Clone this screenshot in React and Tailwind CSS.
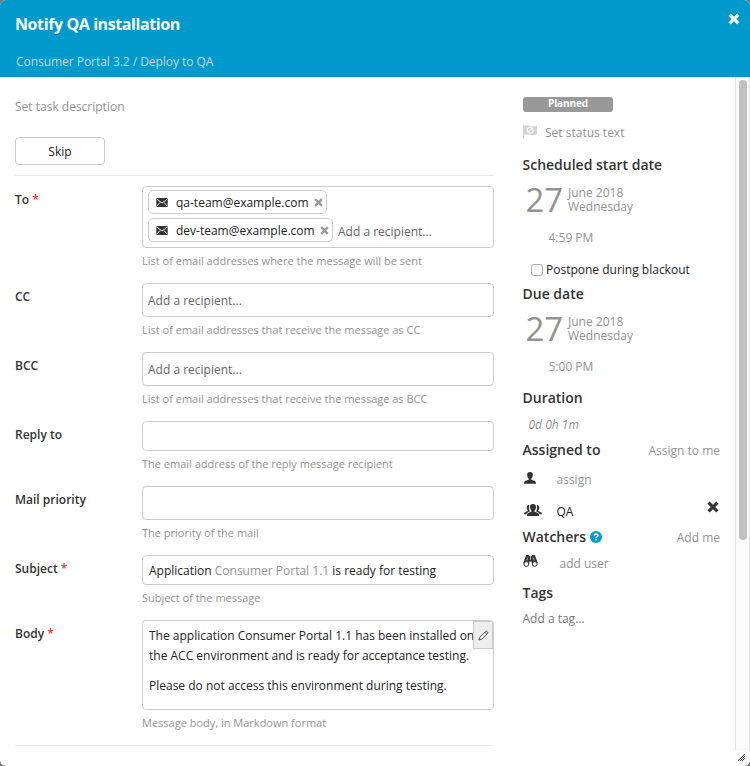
import React from "react";

function Cross({ size, color, className = "" }) {
  return (
    <svg width={size} height={size} viewBox="0 0 10 10" className={"shrink-0 " + className}>
      <path d="M1.3 1.3 8.7 8.7M8.7 1.3 1.3 8.7" stroke={color} strokeWidth="2.6" fill="none" />
    </svg>
  );
}

function Envelope() {
  return (
    <svg width="12" height="9" viewBox="0 0 12 9" className="ml-[7px] mr-[8px] shrink-0">
      <rect x="0.3" y="0" width="11.4" height="9" rx="0.5" fill="#333" />
      <path d="M0.5 0.8 6 5 11.5 0.8M0.8 8.2 4.1 4.3M11.2 8.2 7.9 4.3" stroke="#fff" strokeWidth="0.9" fill="none" />
    </svg>
  );
}

function Chip({ children, width }) {
  return (
    <div className={"flex h-6 shrink-0 items-center rounded-[5px] border border-[#ccc] " + width}>
      <Envelope />
      <span className="grow pt-px text-[12px] text-[#222]">{children}</span>
      <Cross size={9} color="#999" className="mr-[3px] mt-px" />
    </div>
  );
}

function Field({ label, required, help, height, box = "", children }) {
  return (
    <div className="flex">
      <div className="h-[27px] w-[127px] shrink-0 text-[12px] font-semibold leading-[27px] text-[#333]">
        {label}
        {required && <span className="text-[#d9392f]"> *</span>}
      </div>
      <div className="w-[352px]">
        <div className={"relative overflow-hidden rounded-[4px] border border-[#ccc] " + height + " " + box}>{children}</div>
        <div className="mb-3 mt-[3px] h-5 whitespace-nowrap text-[11px] leading-5 text-[#929292]">{help}</div>
      </div>
    </div>
  );
}

function Heading({ children }) {
  return <span className="text-[14px] font-semibold text-[#333]">{children}</span>;
}

function DateBlock() {
  return (
    <div className="mt-2.5 flex h-[30px] items-center pl-[3px] text-[#929292]">
      <span className="w-[42.5px] text-[33px] leading-[30px]">27</span>
      <div className="text-[12px] leading-[14px]">
        <div>June 2018</div>
        <div>Wednesday</div>
      </div>
    </div>
  );
}

export default function App() {
  return (
    <div className="h-[766px] w-[750px] bg-[#777]">
      <div className="flex h-[766px] w-[750px] flex-col overflow-hidden whitespace-nowrap rounded-[6px] bg-white font-['Open_Sans','Noto_Sans',sans-serif] text-[12px]">
        <header className="flex h-[77px] shrink-0 justify-between bg-[#0099cc] pl-[15px] pr-[10px]">
          <div>
            <div className="mt-[14px] h-5 text-[16px] font-bold leading-5 tracking-[-0.4px] text-white">Notify QA installation</div>
            <div className="ml-px mt-[18px] h-5 text-[12px] font-medium leading-5 tracking-[-0.04px] text-[#ccd5d9]">Consumer Portal 3.2 / Deploy to QA</div>
          </div>
          <Cross size={12} color="#fff" className="mt-[13px]" />
        </header>
        <div className="flex h-[674px] shrink-0">
          <main className="ml-[15px] w-[479px] shrink-0">
            <div className="mt-5 h-5 leading-5 text-[#929292]">Set task description</div>
            <button className="mt-[20px] block h-7 w-[90px] rounded-[4px] border border-[#ccc] pt-px text-[12px] leading-[26px] text-[#222]">Skip</button>
            <div className="mb-[10px] mt-[10px] h-px bg-[#e8e8e8]" />
            <Field label="To" required help="List of email addresses where the message will be sent" height="h-[62px]" box="pl-[5px] pt-[3px]">
              <Chip width="w-[179px]">qa-team@example.com</Chip>
              <div className="mt-1 flex items-center">
                <Chip width="w-[185px]">dev-team@example.com</Chip>
                <span className="ml-[5px] pt-[3px] text-[12px] text-[#666]">Add a recipient...</span>
              </div>
            </Field>
            <Field label="CC" help="List of email addresses that receive the message as CC" height="h-[34px]" box="pl-[5px] leading-[34px] text-[#666]">Add a recipient...</Field>
            <Field label="BCC" help="List of email addresses that receive the message as BCC" height="h-[34px]" box="pl-[5px] leading-[34px] text-[#666]">Add a recipient...</Field>
            <Field label="Reply to" help="The email address of the reply message recipient" height="h-[30px]" />
            <Field label="Mail priority" help="The priority of the mail" height="h-[34px]" />
            <Field label="Subject" required help="Subject of the message" height="h-[30px]" box="pl-[6px] leading-[29px] text-[#222]">
              Application <span className="text-[#929292]">Consumer Portal 1.1</span> is ready for testing
            </Field>
            <Field label="Body" required help="Message body, in Markdown format" height="h-[90px]" box="pl-[6px] pt-[5px] text-[#222]">
              <p className="leading-5">The application Consumer Portal 1.1 has been installed on<br />the ACC environment and is ready for acceptance testing.</p>
              <p className="mt-[10px] leading-5">Please do not access this environment during testing.</p>
              <div className="absolute right-0 top-0 flex h-7 w-5 items-center justify-center border border-[#ccc] bg-[#eee]">
                <svg width="11" height="11" viewBox="0 0 11 11" fill="none" stroke="#444" strokeWidth="0.9">
                  <path d="M1 10 1.8 7.2 7.4 1.5Q8.3.7 9.2 1.6T9.5 3.5L3.8 9.2ZM6.8 2.2 8.9 4.3" />
                </svg>
              </div>
            </Field>
            <div className="h-px bg-[#e8e8e8]" />
          </main>
          <aside className="ml-[28.5px] w-[197.5px] shrink-0 pt-5 leading-5 text-[#929292]">
            <div className="ml-[0.5px] h-[15px] w-[90px] rounded-[3px] bg-[#999] text-center text-[10px] font-bold leading-[13px] tracking-[-0.1px] text-white">Planned</div>
            <div className="mt-[10px] flex h-5 items-center">
              <svg width="14" height="14" viewBox="0 0 14 14" className="mr-[8.5px]">
                <path d="M0 0H1V14H0ZM1 1Q4-.5 7 .8T14 .5V9.5Q10 11 7 9.8T1 10Z" fill="#d4d4d4" />
                <circle cx="7.2" cy="5.2" r="3" fill="none" stroke="#fff" />
                <path d="M5.2 7.3 9.2 3.1" stroke="#fff" />
              </svg>
              <span className="pt-0.5">Set status text</span>
            </div>
            <div className="mt-[13px] h-5"><Heading>Scheduled start date</Heading></div>
            <DateBlock />
            <div className="mt-[13px] h-5 pl-[26px]">4:59 PM</div>
            <div className="mt-3 flex h-5 items-center pl-[8.5px] text-[#222]">
              <span className="mr-[3px] h-3 w-3 rounded-[3px] border border-[#aaa]" />
              Postpone during blackout
            </div>
            <div className="mt-1 h-5"><Heading>Due date</Heading></div>
            <DateBlock />
            <div className="mt-[13px] h-5 pl-[26px]">5:00 PM</div>
            <div className="mt-[11px] h-5"><Heading>Duration</Heading></div>
            <div className="mt-[7px] h-5 pl-[6px] italic">0d 0h 1m</div>
            <div className="mt-[5px] flex h-5 justify-between"><Heading>Assigned to</Heading><span className="pt-px">Assign to me</span></div>
            <div className="mt-[10px] flex h-5 items-center">
              <svg width="12" height="12" viewBox="0 0 12 12" className="-mt-1 ml-[1.5px] mr-[20.5px]" fill="#333">
                <path d="M6 0C8 0 9 1.2 8.8 3.2 8.7 5 8 6 7.3 6.6V7.8L11 9Q12 9.5 12 11.8H0Q0 9.5 1 9L4.7 7.8V6.6C4 6 3.3 5 3.2 3.2 3 1.2 4 0 6 0Z" />
              </svg>
              assign
            </div>
            <div className="mt-[11px] flex h-5 items-center text-[#222]">
              <svg width="18" height="12" viewBox="0 0 18 12" className="-mt-0.5 ml-[1px] mr-[15px]" fill="#333">
                <path d="M9 0C11.2 0 12.1 1.3 12 3.2 11.9 5 11.2 6 10.6 6.6V7.7L14 9Q15 9.5 15 12H3Q3 9.5 4 9L7.4 7.7V6.6C6.8 6 6.1 5 6 3.2 5.9 1.3 6.8 0 9 0Z" />
                <path d="M5.3 1C3.4.8 2.6 2 2.7 3.7 2.8 5 3.2 5.8 3.7 6.3V7L1 8.2Q0 8.6 0 10.2H2.2Q2.5 8.7 5.8 7.5 5 5.5 5 3.4 5 2 5.3 1ZM12.7 1C14.6.8 15.4 2 15.3 3.7 15.2 5 14.8 5.8 14.3 6.3V7L17 8.2Q18 8.6 18 10.2H15.8Q15.5 8.7 12.2 7.5 13 5.5 13 3.4 13 2 12.7 1Z" />
              </svg>
              <span className="grow pt-0.5">QA</span>
              <Cross size={12} color="#333" className="-mt-2 mr-[1px]" />
            </div>
            <div className="mt-[6px] flex h-5 items-center">
              <Heading>Watchers</Heading>
              <svg width="12" height="12" viewBox="0 0 11 11" className="ml-[4px]">
                <circle cx="5.5" cy="5.5" r="5.5" fill="#0099cc" />
                <path d="M3.8 4.2Q3.9 2.7 5.6 2.7T7.3 4.1Q7.3 4.8 6.4 5.3T5.6 6.5M5.6 7.5V8.8" stroke="#fff" strokeWidth="1.3" fill="none" />
              </svg>
              <span className="ml-auto pt-0.5">Add me</span>
            </div>
            <div className="mt-[7px] flex h-5 items-center">
              <svg width="15" height="12" viewBox="0 0 15 12" className="-mt-1.5 mr-[22px]" fill="#333">
                <path d="M3 0H6V1H9V0H12L12.5 2 14.8 8 9 9 8.5 6.5H6.5L6 9 .2 8 2.5 2Z" />
                <circle cx="3.3" cy="9" r="2.4" fill="#fff" stroke="#333" strokeWidth="1" />
                <circle cx="11.7" cy="9" r="2.4" fill="#fff" stroke="#333" strokeWidth="1" />
                <path d="M7.5 1V5M5 2.5 3.8 5.5M10 2.5 11.2 5.5" stroke="#fff" strokeWidth=".6" />
              </svg>
              add user
            </div>
            <div className="mt-[9px] h-5"><Heading>Tags</Heading></div>
            <div className="mt-[6px] h-5 text-[#777]">Add a tag...</div>
          </aside>
          <div className="ml-auto w-[15px] border-x border-[#e5e5e5] bg-[#fafafa] pl-[3px] pt-[3px]">
            <div className="h-[460px] w-2 rounded-full bg-[#c1c1c1]" />
          </div>
        </div>
        <div className="flex h-[15px] justify-end pr-[5px] pt-[3px]">
          <svg width="7" height="7" viewBox="0 0 7 7" shapeRendering="crispEdges" fill="#333">
            <path d="M6 0h1v1h-1zM5 1h1v1h-1zM4 2h1v1h-1zM6 2h1v1h-1zM3 3h1v1h-1zM5 3h1v1h-1zM2 4h1v1h-1zM4 4h1v1h-1zM6 4h1v1h-1zM1 5h1v1h-1zM3 5h1v1h-1zM5 5h1v1h-1zM0 6h1v1h-1zM2 6h1v1h-1zM4 6h1v1h-1z" />
          </svg>
        </div>
      </div>
    </div>
  );
}
